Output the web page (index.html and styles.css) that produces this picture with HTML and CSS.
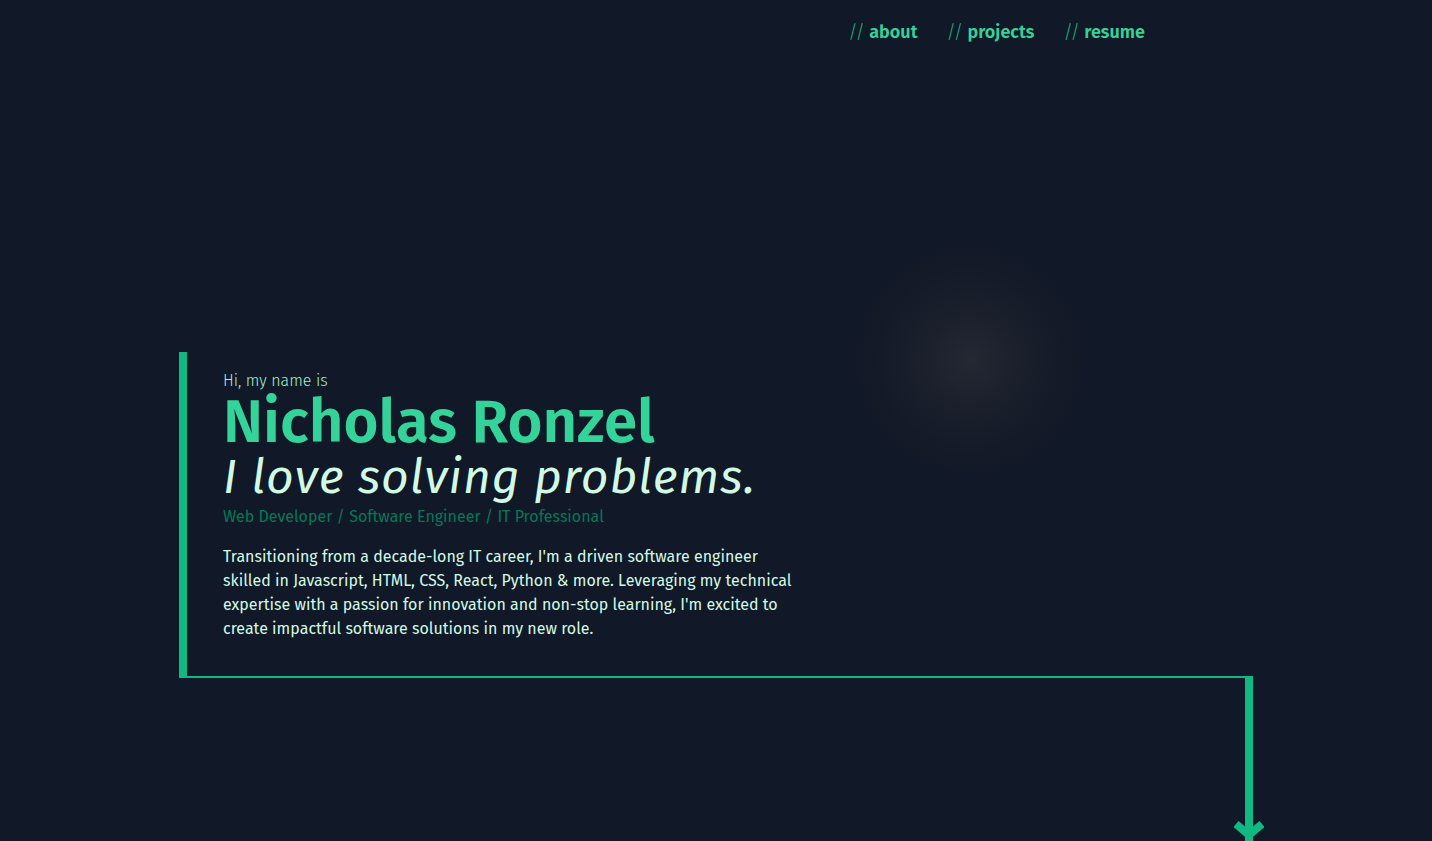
FILE: index.html
```html
<!DOCTYPE html>
<html lang="en">
<head>
<meta charset="utf-8">
<title>Nicholas Ronzel</title>
<link rel="stylesheet" href="styles.css">
</head>
<body>
<header class="topbar">
  <nav class="nav">
    <a class="nav-link" href="#about"><span class="slashes">//</span> about</a>
    <a class="nav-link" href="#projects"><span class="slashes">//</span> projects</a>
    <a class="nav-link" href="#resume"><span class="slashes">//</span> resume</a>
  </nav>
</header>
<main class="hero">
  <section class="intro">
    <p class="greeting">Hi, my name is</p>
    <h1 class="name">Nicholas Ronzel</h1>
    <h2 class="tagline">I love solving problems.</h2>
    <p class="roles">Web Developer / Software Engineer / IT Professional</p>
    <p class="summary">Transitioning from a decade-long IT career, I'm a driven software engineer skilled in Javascript, HTML, CSS, React, Python &amp; more. Leveraging my technical expertise with a passion for innovation and non-stop learning, I'm excited to create impactful software solutions in my new role.</p>
  </section>
  <div class="arrow-row">
    <div class="arrow">
      <div class="arrow-shaft"></div>
      <svg class="arrow-head" width="30" height="22" viewBox="0 0 30 22"><path d="M2 5 L15 16 L28 5" fill="none" stroke="#10b981" stroke-width="8"/></svg>
    </div>
  </div>
</main>
</body>
</html>
```
FILE: styles.css
```css
* { box-sizing: border-box; }
html, body { margin: 0; padding: 0; }
body {
  height: 841px;
  overflow: hidden;
  background: radial-gradient(circle at 970px 360px, #232833 0, #1b202c 45px, #151b28 85px, #111827 118px), #111827;
  background-color: #111827;
  font-family: "Fira Sans", "Open Sans", "Noto Sans", sans-serif;
  color: #d1fae5;
}
.topbar {
  height: 64px;
  display: flex;
  justify-content: flex-end;
  padding-right: 287px;
}
.nav {
  display: flex;
  align-items: center;
  gap: 29px;
}
.nav-link {
  color: #34d399;
  text-decoration: none;
  font-size: 18px;
  font-weight: 600;
}
.slashes {
  color: #10b981;
  font-weight: 300;
}
.hero {
  padding-top: 288px;
  padding-left: 179px;
}
.intro {
  width: 1074px;
  border-left: 8px solid #10b981;
  border-bottom: 2px solid #10b981;
  padding: 17px 0 35px 36px;
}
.greeting {
  margin: 0;
  font-size: 16px;
  line-height: 24px;
  color: #a7f3d0;
  font-weight: 300;
}
.name {
  margin: 0;
  font-size: 60px;
  line-height: 58px;
  font-weight: 600;
  color: #34d399;
}
.tagline {
  margin: 0;
  font-size: 48px;
  line-height: 52px;
  font-style: italic;
  font-weight: 400;
  color: #d1fae5;
  letter-spacing: 1px;
}
.roles {
  margin: 2px 0 0;
  font-size: 16px;
  line-height: 24px;
  color: #047857;
}
.summary {
  margin: 16px 0 0;
  width: 576px;
  font-size: 16px;
  line-height: 24px;
  color: #d1fae5;
}
.arrow-row {
  width: 1074px;
  display: flex;
  justify-content: flex-end;
}
.arrow {
  width: 8px;
  position: relative;
  height: 170px;
}
.arrow-shaft {
  width: 8px;
  height: 170px;
  background: #10b981;
}
.arrow-head {
  position: absolute;
  left: -11px;
  top: 141px;
}
```
